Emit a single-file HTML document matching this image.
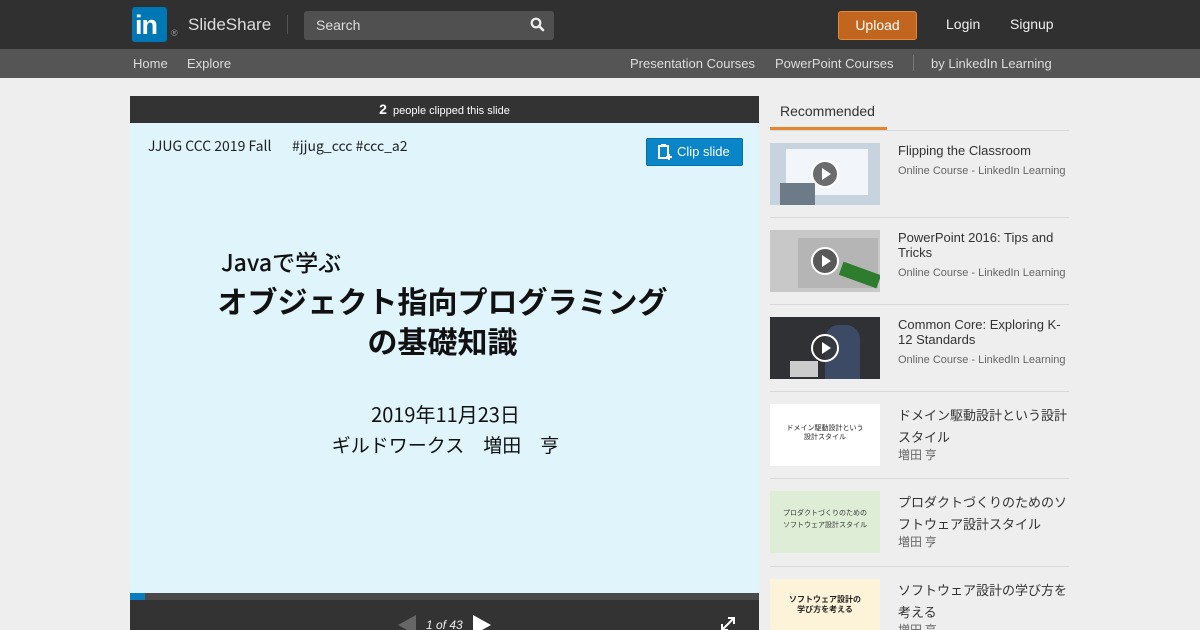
<!DOCTYPE html>
<html><head><meta charset="utf-8"><style>
*{margin:0;padding:0;box-sizing:border-box}
html,body{width:1200px;height:630px;overflow:hidden}
body{background:#eeeeee;font-family:"Liberation Sans","Noto Sans CJK JP",sans-serif;position:relative}
.a{position:absolute}
.jp{font-family:"Noto Sans CJK JP",sans-serif}
.t{font-size:13px;color:#333;line-height:15px}
.s{font-size:11px;color:#666}
.sep{left:770px;width:299px;height:1px;background:#d8d8d8}
.th{left:770px;width:110px;height:62px;overflow:hidden}
.play{width:28px;height:28px;border-radius:50%;border:2px solid #fff;background:rgba(50,50,50,.7);left:41px;top:17px}
.play:after{content:"";position:absolute;left:9px;top:6px;border-left:9px solid #fff;border-top:6px solid transparent;border-bottom:6px solid transparent}
</style></head><body>
<div class="a" style="left:0;top:0;width:1200px;height:49px;background:#303030"></div>
<div class="a" style="left:132px;top:7px;width:35px;height:35px;background:#0077b5;border-radius:3px;color:#fff;font-weight:bold;font-size:27px;line-height:36px;padding-left:3px;letter-spacing:-1px">in</div>
<div class="a" style="left:171px;top:28px;color:#999;font-size:9px">®</div>
<div class="a" style="left:188px;top:15px;color:#ddd;font-size:17px">SlideShare</div>
<div class="a" style="left:287px;top:15px;width:1px;height:19px;background:#555"></div>
<div class="a" style="left:304px;top:11px;width:250px;height:29px;background:#505050;border-radius:3px"></div>
<div class="a" style="left:316px;top:17px;color:#ddd;font-size:14px">Search</div>
<svg class="a" style="left:530px;top:17px" width="15" height="15" viewBox="0 0 15 15"><circle cx="6" cy="6" r="4.3" fill="none" stroke="#eee" stroke-width="2.2"/><path d="M9 9l4 4" stroke="#eee" stroke-width="2.6" stroke-linecap="round"/></svg>
<div class="a" style="left:838px;top:11px;width:79px;height:29px;background:#c2651f;border:1px solid #e08a3a;border-radius:3px;color:#fff;font-size:14px;text-align:center;line-height:27px">Upload</div>
<div class="a" style="left:946px;top:16px;color:#eee;font-size:14px">Login</div>
<div class="a" style="left:1010px;top:16px;color:#eee;font-size:14px">Signup</div>
<div class="a" style="left:0;top:49px;width:1200px;height:29px;background:#555"></div>
<div class="a" style="left:133px;top:56px;color:#ddd;font-size:13px">Home</div>
<div class="a" style="left:187px;top:56px;color:#ddd;font-size:13px">Explore</div>
<div class="a" style="left:630px;top:56px;color:#ddd;font-size:13px">Presentation Courses</div>
<div class="a" style="left:775px;top:56px;color:#ddd;font-size:13px">PowerPoint Courses</div>
<div class="a" style="left:913px;top:55px;width:1px;height:16px;background:#777"></div>
<div class="a" style="left:931px;top:56px;color:#ddd;font-size:13px">by LinkedIn Learning</div>

<div class="a" style="left:130px;top:96px;width:629px;height:27px;background:#333;color:#fff;font-size:11px;text-align:center;line-height:27px"><b style="font-size:14px">2</b>&nbsp; people clipped this slide</div>
<div class="a" style="left:130px;top:123px;width:629px;height:470px;background:#dff4fb"></div>
<div class="a jp" style="left:148px;top:136px;font-size:14px;color:#222">JJUG CCC 2019 Fall</div>
<div class="a jp" style="left:292px;top:136px;font-size:14px;color:#222">#jjug_ccc #ccc_a2</div>
<div class="a" style="left:646px;top:138px;width:97px;height:28px;background:#0a85c7;border:1px solid #0670aa;border-radius:2px;color:#fff;font-size:13px;line-height:26px;padding-left:30px">Clip slide</div>
<svg class="a" style="left:658px;top:144px" width="14" height="16" viewBox="0 0 14 16"><rect x="1" y="2" width="9" height="12" fill="none" stroke="#fff" stroke-width="2"/><rect x="3" y="0" width="5" height="3" fill="#fff"/><path d="M11 10v6M8 13h6" stroke="#fff" stroke-width="2"/></svg>
<div class="a jp" style="left:221px;top:244px;font-size:23px;color:#111;font-weight:500">Javaで学ぶ</div>
<div class="a jp" style="left:130px;width:629px;top:280px;text-align:center;font-size:30px;font-weight:bold;color:#111;line-height:40px;padding-right:4px">オブジェクト指向プログラミング<br>の基礎知識</div>
<div class="a jp" style="left:130px;width:629px;top:399px;text-align:center;font-size:20px;color:#111;padding-left:2px">2019年11月23日</div>
<div class="a jp" style="left:130px;width:629px;top:431px;text-align:center;font-size:19px;color:#111;padding-left:2px">ギルドワークス　増田　亨</div>
<div class="a" style="left:130px;top:593px;width:629px;height:7px;background:#4a4a4a"></div>
<div class="a" style="left:130px;top:593px;width:15px;height:7px;background:#0a7cc0"></div>
<div class="a" style="left:130px;top:600px;width:629px;height:30px;background:#333"></div>
<div class="a" style="left:398px;top:615px;border-right:18px solid #666;border-top:10px solid transparent;border-bottom:10px solid transparent"></div>
<div class="a" style="left:426px;top:618px;color:#eee;font-size:12px;font-style:italic">1 of 43</div>
<div class="a" style="left:473px;top:615px;border-left:18px solid #fff;border-top:10px solid transparent;border-bottom:10px solid transparent"></div>
<svg class="a" style="left:720px;top:616px" width="16" height="14" viewBox="0 0 16 14"><path d="M3 13L13 3M8 2h6v6M2 8v6h6" stroke="#fff" stroke-width="2" fill="none"/></svg>

<div class="a" style="left:780px;top:103px;font-size:14px;color:#333">Recommended</div>
<div class="a" style="left:770px;top:130px;width:299px;height:1px;background:#d8d8d8"></div>
<div class="a" style="left:770px;top:127px;width:117px;height:3px;background:#e6862e"></div>

<div class="a th" style="top:143px;background:#c7d3de"><div class="a" style="left:16px;top:6px;width:82px;height:46px;background:#f2f6fa"></div><div class="a" style="left:10px;top:40px;width:35px;height:22px;background:#6d7a88"></div><div class="a play"></div></div>
<div class="a t" style="left:898px;top:143px">Flipping the Classroom</div>
<div class="a s" style="left:898px;top:165px">Online Course - LinkedIn Learning</div>
<div class="a sep" style="top:217px"></div>

<div class="a th" style="top:230px;background:#c8c8c8"><div class="a" style="left:28px;top:8px;width:80px;height:50px;background:#b5b5b5"></div><div class="a" style="left:70px;top:38px;width:40px;height:14px;background:#2e7d2e;transform:rotate(20deg)"></div><div class="a play"></div></div>
<div class="a t" style="left:898px;top:230px">PowerPoint 2016: Tips and<br>Tricks</div>
<div class="a s" style="left:898px;top:267px">Online Course - LinkedIn Learning</div>
<div class="a sep" style="top:304px"></div>

<div class="a th" style="top:317px;background:#2f3135"><div class="a" style="left:55px;top:8px;width:35px;height:54px;background:#3d4a66;border-radius:14px 14px 0 0"></div><div class="a" style="left:20px;top:44px;width:28px;height:16px;background:#ccc"></div><div class="a play"></div></div>
<div class="a t" style="left:898px;top:317px">Common Core: Exploring K-<br>12 Standards</div>
<div class="a s" style="left:898px;top:354px">Online Course - LinkedIn Learning</div>
<div class="a sep" style="top:391px"></div>

<div class="a th jp" style="top:404px;background:#fff;font-size:7px;text-align:center;padding-top:20px;color:#222;line-height:9px">ドメイン駆動設計という<br>設計スタイル</div>
<div class="a t jp" style="left:898px;top:404px;font-size:13px;line-height:22px;width:172px">ドメイン駆動設計という設計スタイル</div>
<div class="a jp" style="left:898px;top:446px;font-size:12px;color:#666">増田 亨</div>
<div class="a sep" style="top:478px"></div>

<div class="a th jp" style="top:491px;background:#deeed6;font-size:7px;text-align:center;padding-top:16px;color:#333;line-height:12px">プロダクトづくりのための<br>ソフトウェア設計スタイル</div>
<div class="a t jp" style="left:898px;top:491px;font-size:13px;line-height:22px;width:172px">プロダクトづくりのためのソフトウェア設計スタイル</div>
<div class="a jp" style="left:898px;top:533px;font-size:12px;color:#666">増田 亨</div>
<div class="a sep" style="top:566px"></div>

<div class="a th jp" style="top:579px;background:#fdf3d8;font-size:8px;text-align:center;padding-top:16px;color:#222;line-height:10px;font-weight:bold">ソフトウェア設計の<br>学び方を考える</div>
<div class="a t jp" style="left:898px;top:579px;font-size:13px;line-height:22px;width:172px">ソフトウェア設計の学び方を考える</div>
<div class="a jp" style="left:898px;top:621px;font-size:12px;color:#666">増田 亨</div>
</body></html>
